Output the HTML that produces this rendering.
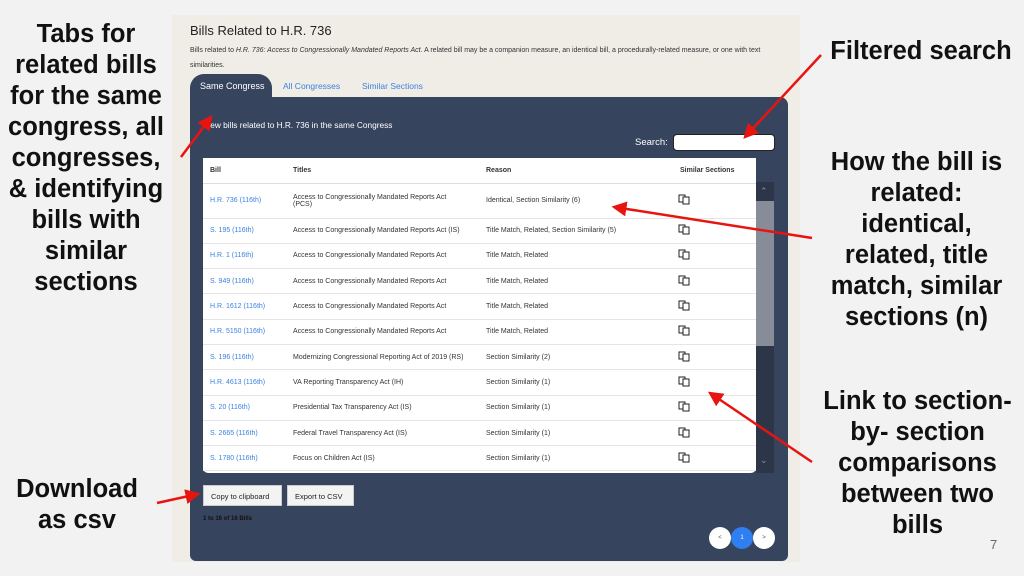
<!DOCTYPE html>
<html><head><meta charset="utf-8"><style>
*{margin:0;padding:0;box-sizing:border-box}
body{width:1024px;height:576px;background:#f2f2f2;position:relative;overflow:hidden;font-family:"Liberation Sans",sans-serif}
.ann{position:absolute;font-weight:bold;font-size:25.5px;line-height:31px;text-align:center;color:#111}
.shot{position:absolute;left:172px;top:15px;width:628px;height:547px;background:#f0ede6}
.panel{position:absolute;left:190px;top:97px;width:598px;height:464px;background:#37445e;border-radius:0 8px 6px 6px}
.tab{position:absolute;left:190px;top:74px;width:82px;height:26px;background:#37445e;border-radius:14px 14px 0 0;color:#fff;font-size:9px;padding:7px 0 0 10px}
.t{position:absolute;font-size:7px;color:#333}
.lnk{color:#3b82e0}
table{position:absolute;left:203px;top:158px;width:553px;border-collapse:collapse;background:#fff;font-size:7px;color:#333}
td{padding:0 7px;height:25.3px;border-bottom:1px solid #e5e5e5;vertical-align:middle}
th{height:25px;text-align:left;padding:0 7px;font-size:7px;border-bottom:1px solid #ddd}
td:first-child{color:#3b82e0}
td:last-child{padding-left:5px}
.btn{position:absolute;top:485px;height:21px;background:#f3f3f3;border:1px solid #ccc;font-size:7.5px;color:#222;padding:6px 7px}
</style></head><body>
<div class="ann" style="left:0;top:19px;width:172px">Tabs for<br>related bills<br>for the same<br>congress, all<br>congresses,<br>&amp; identifying<br>bills with<br>similar<br>sections</div>
<div class="ann" style="left:0;top:474px;width:154px">Download<br>as csv</div>
<div class="ann" style="left:815px;top:36px;width:212px">Filtered search</div>
<div class="ann" style="left:815px;top:147px;width:203px">How the bill is<br>related:<br>identical,<br>related, title<br>match, similar<br>sections (n)</div>
<div class="ann" style="left:812px;top:386px;width:211px">Link to section-<br>by- section<br>comparisons<br>between two<br>bills</div>
<div style="position:absolute;left:990px;top:537px;font-size:13px;color:#666">7</div>

<div class="shot"></div>
<div style="position:absolute;left:190px;top:23px;font-size:13px;color:#222">Bills Related to H.R. 736</div>
<div class="t" style="left:190px;top:43px;width:594px;font-size:7px;line-height:15px">Bills related to <i>H.R. 736: Access to Congressionally Mandated Reports Act</i>. A related bill may be a companion measure, an identical bill, a procedurally-related measure, or one with text similarities.</div>
<div class="panel"></div>
<div class="tab">Same Congress</div>
<div class="t lnk" style="left:283px;top:81px;font-size:8.5px">All Congresses</div>
<div class="t lnk" style="left:362px;top:81px;font-size:8.5px">Similar Sections</div>
<div class="t" style="left:203px;top:120px;color:#fff;font-size:8.3px">View bills related to H.R. 736 in the same Congress</div>
<div class="t" style="left:635px;top:137px;color:#fff;font-size:9.5px">Search:</div>
<div style="position:absolute;left:673px;top:134px;width:102px;height:17px;background:#fff;border:1px solid #222;border-radius:4px"></div>
<div style="position:absolute;left:203px;top:158px;width:553px;height:315px;background:#fff;border-radius:5px"></div>
<table>
<tr><th style="width:83px">Bill</th><th style="width:193px">Titles</th><th style="width:194px">Reason</th><th>Similar Sections</th></tr>
<tr><td style="height:35px">H.R. 736 (116th)</td><td>Access to Congressionally Mandated Reports Act<br>(PCS)</td><td>Identical, Section Similarity (6)</td><td><svg width="12" height="11"><rect x="1" y="1" width="6" height="7" fill="#fff" stroke="#222"/><rect x="5" y="3" width="6" height="7" fill="#fff" stroke="#222"/></svg></td></tr>
<tr><td>S. 195 (116th)</td><td>Access to Congressionally Mandated Reports Act (IS)</td><td>Title Match, Related, Section Similarity (5)</td><td><svg width="12" height="11"><rect x="1" y="1" width="6" height="7" fill="#fff" stroke="#222"/><rect x="5" y="3" width="6" height="7" fill="#fff" stroke="#222"/></svg></td></tr>
<tr><td>H.R. 1 (116th)</td><td>Access to Congressionally Mandated Reports Act</td><td>Title Match, Related</td><td><svg width="12" height="11"><rect x="1" y="1" width="6" height="7" fill="#fff" stroke="#222"/><rect x="5" y="3" width="6" height="7" fill="#fff" stroke="#222"/></svg></td></tr>
<tr><td>S. 949 (116th)</td><td>Access to Congressionally Mandated Reports Act</td><td>Title Match, Related</td><td><svg width="12" height="11"><rect x="1" y="1" width="6" height="7" fill="#fff" stroke="#222"/><rect x="5" y="3" width="6" height="7" fill="#fff" stroke="#222"/></svg></td></tr>
<tr><td>H.R. 1612 (116th)</td><td>Access to Congressionally Mandated Reports Act</td><td>Title Match, Related</td><td><svg width="12" height="11"><rect x="1" y="1" width="6" height="7" fill="#fff" stroke="#222"/><rect x="5" y="3" width="6" height="7" fill="#fff" stroke="#222"/></svg></td></tr>
<tr><td>H.R. 5150 (116th)</td><td>Access to Congressionally Mandated Reports Act</td><td>Title Match, Related</td><td><svg width="12" height="11"><rect x="1" y="1" width="6" height="7" fill="#fff" stroke="#222"/><rect x="5" y="3" width="6" height="7" fill="#fff" stroke="#222"/></svg></td></tr>
<tr><td>S. 196 (116th)</td><td>Modernizing Congressional Reporting Act of 2019 (RS)</td><td>Section Similarity (2)</td><td><svg width="12" height="11"><rect x="1" y="1" width="6" height="7" fill="#fff" stroke="#222"/><rect x="5" y="3" width="6" height="7" fill="#fff" stroke="#222"/></svg></td></tr>
<tr><td>H.R. 4613 (116th)</td><td>VA Reporting Transparency Act (IH)</td><td>Section Similarity (1)</td><td><svg width="12" height="11"><rect x="1" y="1" width="6" height="7" fill="#fff" stroke="#222"/><rect x="5" y="3" width="6" height="7" fill="#fff" stroke="#222"/></svg></td></tr>
<tr><td>S. 20 (116th)</td><td>Presidential Tax Transparency Act (IS)</td><td>Section Similarity (1)</td><td><svg width="12" height="11"><rect x="1" y="1" width="6" height="7" fill="#fff" stroke="#222"/><rect x="5" y="3" width="6" height="7" fill="#fff" stroke="#222"/></svg></td></tr>
<tr><td>S. 2665 (116th)</td><td>Federal Travel Transparency Act (IS)</td><td>Section Similarity (1)</td><td><svg width="12" height="11"><rect x="1" y="1" width="6" height="7" fill="#fff" stroke="#222"/><rect x="5" y="3" width="6" height="7" fill="#fff" stroke="#222"/></svg></td></tr>
<tr><td>S. 1780 (116th)</td><td>Focus on Children Act (IS)</td><td>Section Similarity (1)</td><td><svg width="12" height="11"><rect x="1" y="1" width="6" height="7" fill="#fff" stroke="#222"/><rect x="5" y="3" width="6" height="7" fill="#fff" stroke="#222"/></svg></td></tr>
</table>
<div style="position:absolute;left:756px;top:182px;width:18px;height:291px;background:#2d3648"></div>
<div style="position:absolute;left:756px;top:201px;width:18px;height:145px;background:#878d98"></div>
<div style="position:absolute;left:760px;top:186px;color:#8a93a5;font-size:9px">&#8963;</div>
<div style="position:absolute;left:760px;top:455px;color:#8a93a5;font-size:9px">&#8964;</div>
<div class="btn" style="left:203px;width:79px">Copy to clipboard</div>
<div class="btn" style="left:287px;width:67px">Export to CSV</div>
<div class="t" style="left:203px;top:516px;font-size:6px;font-weight:bold;color:#111">1 to 16 of 16 Bills</div>
<div style="position:absolute;left:709px;top:527px;width:22px;height:22px;border-radius:50%;background:#fff;font-size:6px;text-align:center;line-height:22px;color:#555">&lt;</div>
<div style="position:absolute;left:753px;top:527px;width:22px;height:22px;border-radius:50%;background:#fff;font-size:6px;text-align:center;line-height:22px;color:#555">&gt;</div>
<div style="position:absolute;left:731px;top:527px;width:22px;height:22px;border-radius:50%;background:#2f7ff0;font-size:6px;text-align:center;line-height:22px;color:#fff">1</div>

<svg style="position:absolute;left:0;top:0" width="1024" height="576">
<defs><marker id="a" markerWidth="6" markerHeight="6" refX="5" refY="3" orient="auto" markerUnits="strokeWidth"><path d="M0,0 L6,3 L0,6 z" fill="#e8140f"/></marker></defs>
<g stroke="#e8140f" stroke-width="2.5" fill="none" marker-end="url(#a)">
<line x1="181" y1="157" x2="211" y2="117"/>
<line x1="821" y1="55" x2="745" y2="137"/>
<line x1="812" y1="238" x2="614" y2="207"/>
<line x1="812" y1="462" x2="710" y2="393"/>
<line x1="157" y1="503" x2="198" y2="494"/>
</g></svg>
</body></html>
